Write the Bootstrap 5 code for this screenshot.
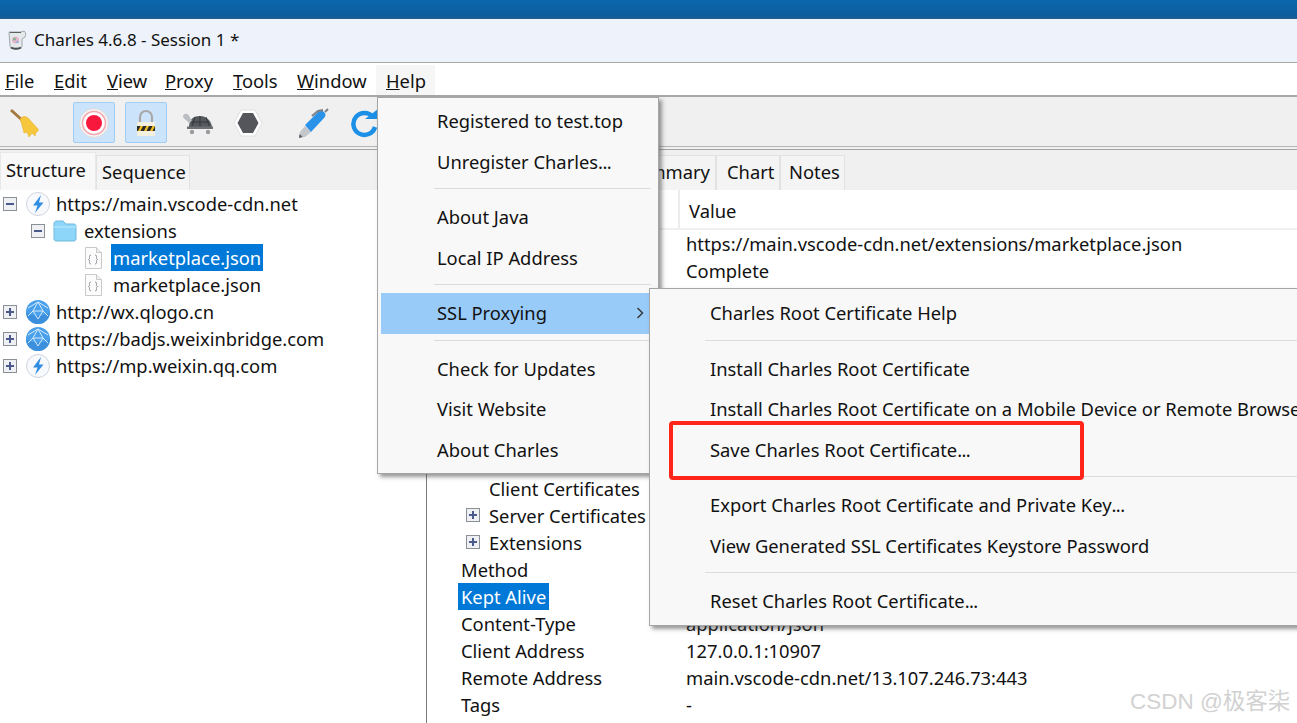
<!DOCTYPE html>
<html lang="en">
<head>
<meta charset="utf-8">
<title>Charles 4.6.8 - Session 1 *</title>
<link href="https://cdn.jsdelivr.net/npm/bootstrap@5.3.0/dist/css/bootstrap.min.css" rel="stylesheet">
<style>
html,body{height:723px;overflow:hidden;background:#fff}
body{font-family:"Noto Sans","Liberation Sans",sans-serif;font-size:18.35px;color:#111;line-height:27px}
.app-shell{height:723px;width:1297px;overflow:hidden}
.desk-strip{height:19px;background:linear-gradient(#0b68ad,#0d5c9b 85%,#27608e);flex:none}
.title-strip{height:44px;background:#edf2fb;border-bottom:1px solid #a9a9a9;padding-left:7px;padding-bottom:2px;gap:7px;flex:none}
.title-strip span{font-size:17px}
.menu-strip{height:34px;border-bottom:2px solid #a8a8a8;padding:0;flex:none;background:#fff;justify-content:flex-start}
.menu-word{position:absolute;top:2px;height:30px;line-height:32px;color:#111}
.menu-word.on{background:#f6f6f6;left:376px;width:59px;padding-left:10px}
.tool-strip{height:50px;background:#f0f0f0;border-bottom:1px solid #b4b4b4;flex:none}
.tool-gap{padding-left:4px;padding-top:5px;gap:10px}
.tool-btn{width:42px;height:41px;border:1px solid transparent;border-radius:2px;padding:0}
.tool-btn.on{background:#cce4fb;border-color:#9fcdf5}
.tool-btn.slim{width:40px}
.tool-lead{margin-left:17px}
.tool-far{margin-left:14px}
.tool-next{margin-left:-2px}
.hair-gap{height:2px;background:#f0f0f0;flex:none}
.work-left{width:426px;flex:none}
.work-right{flex:1;min-width:0}
.tab-band{height:41px;background:#f0f0f0;flex:none;border-top:1px solid #a4a4a4}
.tab-cell{background:#f4f4f4;border:1px solid #e2e2e2;border-bottom:0;margin-top:5px;height:35px;line-height:31px;padding-left:5px;white-space:nowrap}
.tab-cell.sel{background:#f8f8f8;margin-top:2px;height:38px;line-height:33px;width:96px;padding-left:5px;border-color:#e8e8e8}
.tab-seq{width:94px}
.tab-over{width:196px}
.tab-sum{width:94px;padding-left:4px}
.tab-chart{width:64px;padding-left:10px}
.tab-notes{width:65px;padding-left:8px}
.tree-row{height:27px}
.tree-ind1{padding-left:28px}
.tree-ind2{padding-left:84px}
.twist{width:14px;height:14px;flex:none;margin-left:3px;margin-right:8px;display:block}
.tree-ico{width:26px;height:26px;flex:none;margin-right:5px}
.fold-ico{width:24px;height:22px;flex:none;margin-right:7px}
.file-ico{width:18px;height:22px;flex:none;margin-right:11px}
.tree-sel{background:#0078d7;color:#fff;margin-left:-2px;padding:0 2px}
.sheet-panel{border-left:1px solid #7c7c7c;height:533px}
.sheet-head{height:40px;border-bottom:2px solid #f0f0f0;padding-left:251px}
.sheet-head span{border-left:2px solid #ececec;padding-left:9px;height:38px;line-height:42px;display:block}
.sheet-row{height:27px;line-height:27px;white-space:nowrap}
.sheet-after{margin-top:2px}
.key-col{width:259px;padding-left:34px;flex:none}
.key-col.deep{padding-left:62px;position:relative}
.mini-twist{position:absolute;left:39px;top:6px;width:14px;height:14px}
.key-sel{background:#0078d7;color:#fff;margin-left:-3px;padding:0 3px;display:inline-block}
.app-menu.dropdown-menu{display:block;border:1px solid #a6a6a6;border-radius:0;background:#f8f8f8;padding:0;margin:0;font-size:18.35px;box-shadow:3px 3px 4px rgba(70,70,70,.55);color:#111;min-width:0}
.help-pop{position:absolute;left:377px;top:97px;width:282px;height:377px;padding-top:3px!important}
.ssl-pop{position:absolute;left:649px;top:288px;width:660px;height:338px;padding-top:4px!important}
.app-menu .dropdown-item{height:40.5px;line-height:40px;padding:0 0 0 56px;margin:0 3px;width:auto;color:#111;background:transparent;white-space:nowrap;position:relative}
.ssl-pop .dropdown-item{padding-left:57px;margin-right:0}
.app-menu .dropdown-item.hot{background:#99cbf9}
.hot-arrow{position:absolute;right:11px;top:13px;width:8px;height:14px}
.dot-run{letter-spacing:-.6px}
.sep-gap{height:15px;padding-top:6px}
.sep-gap hr{margin:0 7px 0 56px;border:0;border-top:1px solid #dcdcdc;opacity:1}
.ssl-pop .sep-gap hr{margin:0 0 0 55px}
.callout-box{position:absolute;left:669px;top:421px;width:415px;height:59px;border:4px solid #ff2518;border-radius:4px;z-index:1100}
.mark-text{position:absolute;left:1130px;top:688px;font-size:22.5px;color:#d2d2d2;z-index:1100;font-family:"Liberation Sans","Noto Sans CJK SC",sans-serif;line-height:27px;white-space:nowrap}
</style>
</head>
<body>
<svg width="0" height="0" class="position-absolute">
<defs>
<symbol id="i-minus" viewBox="0 0 14 14"><rect x=".5" y=".5" width="13" height="13" fill="#eef0f3" stroke="#8b8f96"/><rect x="3" y="6" width="8" height="2" fill="#4a5a8c"/></symbol>
<symbol id="i-plus" viewBox="0 0 14 14"><rect x=".5" y=".5" width="13" height="13" fill="#eef0f3" stroke="#8b8f96"/><rect x="3" y="6" width="8" height="2" fill="#4a5a8c"/><rect x="6" y="3" width="2" height="8" fill="#4a5a8c"/></symbol>
<symbol id="i-bolt" viewBox="0 0 26 26"><circle cx="13" cy="13" r="11.500" fill="#f7f9fc" stroke="#cfd5dd"/><path d="M16 4 8 14.500h4.500L10 22l8.500-10.500H14z" fill="#2f8de4"/></symbol>
<symbol id="i-globe" viewBox="0 0 26 26"><circle cx="13" cy="13" r="12" fill="#4aa0ea"/><path d="M1 13a12 12 0 0 0 24 0c-5 5-19 5-24 0z" fill="#3b8fdd"/><path d="M13 3 8 12l5 8 5-8zM8 12h10M3 9l10-6 10 6M8 12l-5 5M18 12l5 5" fill="none" stroke="#d4ebfc" stroke-width="1"/></symbol>
<symbol id="i-file" viewBox="0 0 18 22"><path d="M1.500.5h11l5 5v16h-16z" fill="#fcfcfc" stroke="#c9c9c9"/><path d="M12.500.5v5h5" fill="#eee" stroke="#c9c9c9"/><path d="M7 8c-1.500 0-1.500 1-1.500 2.500S5.500 12 4.500 12.500c1 .5 1 .5 1 2s0 2.500 1.500 2.500M11 8c1.500 0 1.500 1 1.500 2.500s0 1.500 1 2c-1 .5-1 .5-1 2s0 2.500-1.500 2.500" fill="none" stroke="#8a8f96"/></symbol>
</defs>
</svg>
<div class="app-shell d-flex flex-column position-relative">
  <div class="desk-strip"></div>
  <div class="title-strip d-flex align-items-center">
    <svg width="20" height="22" viewBox="0 0 20 22"><path d="M2 3h12l3-1c2 1 2 4 1 6l-3 2v7c0 2-2 3-6 3s-6-1-6-3z" fill="#e6e9ea" stroke="#a0a6a8"/><circle cx="8.500" cy="11" r="3.500" fill="#e7b3cd"/><circle cx="7.500" cy="10" r="1.500" fill="#7fb98f"/><circle cx="10.500" cy="13" r="1.200" fill="#8ab4dc"/><path d="M3 3.500h11" stroke="#5a6062"/><path d="M4 18.500c2 1.500 8 1.500 10 0" stroke="#4a4f50" stroke-width="2" fill="none"/></svg>
    <span>Charles 4.6.8 - Session 1 *</span>
  </div>
  <nav class="menu-strip navbar position-relative">
    <span class="menu-word" style="left:5px"><u>F</u>ile</span>
    <span class="menu-word" style="left:54px"><u>E</u>dit</span>
    <span class="menu-word" style="left:107px"><u>V</u>iew</span>
    <span class="menu-word" style="left:165px"><u>P</u>roxy</span>
    <span class="menu-word" style="left:233px"><u>T</u>ools</span>
    <span class="menu-word" style="left:297px"><u>W</u>indow</span>
    <span class="menu-word on"><u>H</u>elp</span>
  </nav>
  <div class="tool-strip d-flex tool-gap">
    <span class="tool-btn d-flex align-items-center justify-content-center"><svg width="32" height="32" viewBox="0 0 32 32"><path d="M2 3 13 13" stroke="#a5793f" stroke-width="3"/><path d="M11 12c3-3 5-3 8-1l10 11c1 2-1 3-2 3l-1 4-3-3-3 4-2-5-3 1c-1-4-2-9-4-14z" fill="#f6c63c" stroke="#e6b026" stroke-width=".6"/></svg></span>
    <span class="tool-btn on tool-lead d-flex align-items-center justify-content-center"><svg width="32" height="32" viewBox="0 0 32 32"><circle cx="16" cy="16" r="14.500" fill="#f4f2f3" stroke="#dcdcdc"/><circle cx="16" cy="16" r="11.500" fill="#fff" stroke="#f3a8b0" stroke-width="1.500"/><circle cx="16" cy="16" r="8" fill="#f8183e"/></svg></span>
    <span class="tool-btn on d-flex align-items-center justify-content-center"><svg width="20" height="28" viewBox="0 0 20 28"><path d="M4 13V8a6 6 0 0 1 12 0v5" fill="none" stroke="#a8a8a8" stroke-width="2.200"/><rect x="1" y="13" width="18" height="14" rx="1" fill="#f4f0df"/><rect x="1" y="17" width="18" height="5" fill="#2a2a2a"/><path d="M2 22l2.500-5h2.500l-2.500 5zM8 22l2.500-5h2.500l-2.500 5zM14 22l2.500-5h2.500l-2.500 5z" fill="#f0c020"/></svg></span>
    <span class="tool-btn slim d-flex align-items-center justify-content-center"><svg width="31" height="24" viewBox="0 0 31 24"><path d="M7 16C7 8 12 5 18 5s11 4 12 11z" fill="#55585c"/><path d="M5 15.500h26V18H5z" fill="#6d6f72"/><path d="M1 5c1-3 5-3 6 0l3 5-3 2C5 9 1 8 1 5z" fill="#b9bcc0"/><circle cx="10" cy="21" r="2.200" fill="#9a9da0"/><circle cx="26" cy="21" r="2.200" fill="#9a9da0"/><path d="M13 6l-3 9M18 5v10M24 6l3 9M9 11h18" stroke="#36383b" fill="none"/></svg></span>
    <span class="tool-btn d-flex align-items-center justify-content-center"><svg width="30" height="30" viewBox="0 0 30 30"><path d="M8 2h14l7 13-7 13H8L1 15z" fill="#fff" stroke="#e0e0e0"/><path d="M10 5h10l5.500 10L20 25H10L4.500 15z" fill="#55565c"/></svg></span>
    <span class="tool-btn tool-far d-flex align-items-center justify-content-center"><svg width="32" height="32" viewBox="0 0 32 32"><path d="M1 31l1-6 5-6 6 6-6 5z" fill="#c3c6ca"/><path d="M1 31l.600-4 3 3z" fill="#5a5d62"/><path d="M7 18 20 5c2-2 4-2 6 0s2 4 0 6L13 25z" fill="#2a93e8"/><path d="M14 9l6-5 5-1M27 5l3-3" stroke="#7d8186" stroke-width="2" fill="none"/></svg></span>
    <span class="tool-btn tool-next d-flex align-items-center justify-content-center"><svg width="30" height="30" viewBox="0 0 30 30"><path d="M24 9A11 11 0 1 0 26 19" fill="none" stroke="#1c8fe6" stroke-width="4.500"/><path d="M16 11h13V1z" fill="#1c8fe6"/></svg></span>
  </div>
  <div class="hair-gap"></div>
  <div class="d-flex flex-grow-1">
    <div class="work-left d-flex flex-column">
      <div class="tab-band d-flex">
        <span class="tab-cell sel">Structure</span>
        <span class="tab-cell tab-seq">Sequence</span>
      </div>
      <div>
        <div class="tree-row d-flex align-items-center"><svg class="twist"><use href="#i-minus"/></svg><svg class="tree-ico"><use href="#i-bolt"/></svg><span>https://main.vscode-cdn.net</span></div>
        <div class="tree-row d-flex align-items-center tree-ind1"><svg class="twist"><use href="#i-minus"/></svg><svg class="fold-ico" viewBox="0 0 24 22"><path d="M1 4c0-2 1-3 3-3h6l3 3h8c1 0 2 1 2 2v13c0 1-1 2-2 2H3c-1 0-2-1-2-2z" fill="#8ed6f9" stroke="#6fb9dd"/><path d="M1 7h22" stroke="#bde9fd"/></svg><span>extensions</span></div>
        <div class="tree-row d-flex align-items-center tree-ind2"><svg class="file-ico"><use href="#i-file"/></svg><span class="tree-sel">marketplace.json</span></div>
        <div class="tree-row d-flex align-items-center tree-ind2"><svg class="file-ico"><use href="#i-file"/></svg><span>marketplace.json</span></div>
        <div class="tree-row d-flex align-items-center"><svg class="twist"><use href="#i-plus"/></svg><svg class="tree-ico"><use href="#i-globe"/></svg><span>http://wx.qlogo.cn</span></div>
        <div class="tree-row d-flex align-items-center"><svg class="twist"><use href="#i-plus"/></svg><svg class="tree-ico"><use href="#i-globe"/></svg><span>https://badjs.weixinbridge.com</span></div>
        <div class="tree-row d-flex align-items-center"><svg class="twist"><use href="#i-plus"/></svg><svg class="tree-ico"><use href="#i-bolt"/></svg><span>https://mp.weixin.qq.com</span></div>
      </div>
    </div>
    <div class="work-right d-flex flex-column">
      <div class="tab-band d-flex">
        <span class="tab-cell tab-over">Overview</span>
        <span class="tab-cell tab-sum">Summary</span>
        <span class="tab-cell tab-chart">Chart</span>
        <span class="tab-cell tab-notes">Notes</span>
      </div>
      <div class="sheet-panel">
        <div class="sheet-head"><span>Value</span></div>
        <div class="sheet-row d-flex"><span class="key-col">URL</span><span>https://main.vscode-cdn.net/extensions/marketplace.json</span></div>
        <div class="sheet-row d-flex"><span class="key-col">Status</span><span>Complete</span></div>
        <div class="sheet-row"></div><div class="sheet-row"></div><div class="sheet-row"></div><div class="sheet-row"></div><div class="sheet-row"></div><div class="sheet-row"></div><div class="sheet-row"></div>
        <div class="sheet-row sheet-after d-flex"><span class="key-col deep">Client Certificates</span></div>
        <div class="sheet-row d-flex"><span class="key-col deep"><svg class="mini-twist"><use href="#i-plus"/></svg>Server Certificates</span></div>
        <div class="sheet-row d-flex"><span class="key-col deep"><svg class="mini-twist"><use href="#i-plus"/></svg>Extensions</span></div>
        <div class="sheet-row d-flex"><span class="key-col">Method</span></div>
        <div class="sheet-row d-flex"><span class="key-col"><span class="key-sel">Kept Alive</span></span></div>
        <div class="sheet-row d-flex"><span class="key-col">Content-Type</span><span>application/json</span></div>
        <div class="sheet-row d-flex"><span class="key-col">Client Address</span><span>127.0.0.1:10907</span></div>
        <div class="sheet-row d-flex"><span class="key-col">Remote Address</span><span>main.vscode-cdn.net/13.107.246.73:443</span></div>
        <div class="sheet-row d-flex"><span class="key-col">Tags</span><span>-</span></div>
      </div>
    </div>
  </div>

  <div class="dropdown-menu app-menu help-pop">
    <a class="dropdown-item">Registered to test.top</a>
    <a class="dropdown-item">Unregister Charles<span class="dot-run">...</span></a>
    <div class="sep-gap"><hr></div>
    <a class="dropdown-item">About Java</a>
    <a class="dropdown-item">Local IP Address</a>
    <div class="sep-gap"><hr></div>
    <a class="dropdown-item hot">SSL Proxying<svg class="hot-arrow" viewBox="0 0 8 14"><path d="M1.500 2 6.500 7l-5 5" fill="none" stroke="#333" stroke-width="1.400"/></svg></a>
    <div class="sep-gap"><hr></div>
    <a class="dropdown-item">Check for Updates</a>
    <a class="dropdown-item">Visit Website</a>
    <a class="dropdown-item">About Charles</a>
  </div>
  <div class="dropdown-menu app-menu ssl-pop">
    <a class="dropdown-item">Charles Root Certificate Help</a>
    <div class="sep-gap"><hr></div>
    <a class="dropdown-item">Install Charles Root Certificate</a>
    <a class="dropdown-item">Install Charles Root Certificate on a Mobile Device or Remote Browser</a>
    <a class="dropdown-item">Save Charles Root Certificate<span class="dot-run">...</span></a>
    <div class="sep-gap"><hr></div>
    <a class="dropdown-item">Export Charles Root Certificate and Private Key<span class="dot-run">...</span></a>
    <a class="dropdown-item">View Generated SSL Certificates Keystore Password</a>
    <div class="sep-gap"><hr></div>
    <a class="dropdown-item">Reset Charles Root Certificate<span class="dot-run">...</span></a>
  </div>
  <div class="callout-box"></div>
  <div class="mark-text">CSDN @极客柒</div>
</div>
<script src="https://cdn.jsdelivr.net/npm/bootstrap@5.3.0/dist/js/bootstrap.bundle.min.js"></script>
</body>
</html>
